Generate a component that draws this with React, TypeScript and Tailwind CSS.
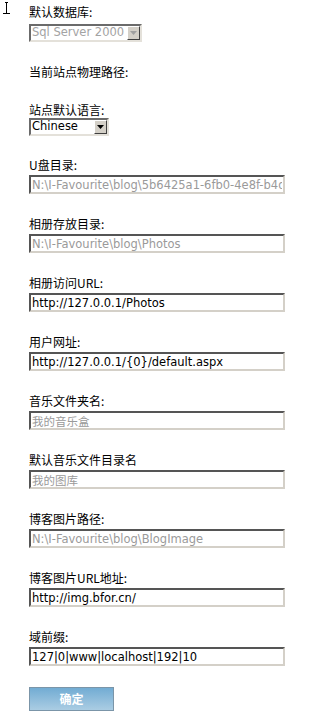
import type { ReactNode } from "react";

const cjk = "font-['SimSun','Noto_Sans_CJK_SC',sans-serif]";
const latin = "font-['DejaVu_Sans','Noto_Sans_CJK_SC',sans-serif]";

type Field = { label: string; value: string; disabled?: boolean };

const fields: Field[] = [
  {
    label: "U盘目录:",
    value: "N:\\I-Favourite\\blog\\5b6425a1-6fb0-4e8f-b4de-3c5a8d2f1e07\\",
    disabled: true,
  },
  { label: "相册存放目录:", value: "N:\\I-Favourite\\blog\\Photos", disabled: true },
  { label: "相册访问URL:", value: "http://127.0.0.1/Photos" },
  { label: "用户网址:", value: "http://127.0.0.1/{0}/default.aspx" },
  { label: "音乐文件夹名:", value: "我的音乐盒", disabled: true },
  { label: "默认音乐文件目录名", value: "我的图库", disabled: true },
  { label: "博客图片路径:", value: "N:\\I-Favourite\\blog\\BlogImage", disabled: true },
  { label: "博客图片URL地址:", value: "http://img.bfor.cn/" },
  { label: "域前缀:", value: "127|0|www|localhost|192|10" },
];

function Label({ children }: { children: ReactNode }) {
  return <div className={`${cjk} text-[12px] leading-[14px] text-black`}>{children}</div>;
}

function Arrow({ disabled }: { disabled?: boolean }) {
  return (
    <div className="flex w-[13px] shrink-0 items-center justify-center border border-t-white border-l-white border-r-[#404040] border-b-[#404040] bg-[#d4d0c8]">
      <svg width="7" height="4" viewBox="0 0 7 4">
        <path d="M0 0h7L3.5 4z" fill={disabled ? "#a0a0a0" : "#000"} />
      </svg>
    </div>
  );
}

function FakeSelect({
  value,
  width,
  disabled,
}: {
  value: string;
  width: string;
  disabled?: boolean;
}) {
  return (
    <div
      className={`flex ${width} h-[18px] border-2 border-t-[#6b6b6b] border-l-[#6b6b6b] border-b-[#e4e1da] border-r-[#e4e1da] bg-white`}
    >
      <div
        className={`${latin} flex flex-1 items-center overflow-hidden whitespace-nowrap pl-[1px] text-[11.5px] ${
          disabled ? "text-[#a3a3a3]" : "text-black"
        }`}
      >
        {value}
      </div>
      <Arrow disabled={disabled} />
    </div>
  );
}

function TextBox({ value, disabled }: Field) {
  return (
    <input
      readOnly
      value={value}
      className={`${latin} block h-[19px] w-[256px] border-2 border-t-[#555] border-l-[#555] border-b-[#d4d0c8] border-r-[#d4d0c8] bg-white px-[1px] text-[11.5px] leading-[15px] outline-none ${
        disabled ? "text-[#9a9a9a]" : "text-black"
      }`}
    />
  );
}

export default function App() {
  return (
    <div className="relative h-[726px] w-[321px] overflow-hidden bg-white pl-[29px] pt-[5px]">
      <svg className="absolute left-[2px] top-[1px]" width="9" height="14" viewBox="0 0 9 14">
        <path d="M3 1.5h3M4.5 1.5v11M1 12.5h7" stroke="#000" strokeWidth="1" fill="none" />
      </svg>

      <Label>默认数据库:</Label>
      <div className="mt-[5px]">
        <FakeSelect value="Sql Server 2000" width="w-[113px]" disabled />
      </div>

      <div className="mt-[23px]">
        <Label>当前站点物理路径:</Label>
      </div>

      <div className="mt-[24px]">
        <Label>站点默认语言:</Label>
        <div className="mt-[1px]">
          <FakeSelect value="Chinese" width="w-[80px]" />
        </div>
      </div>

      <div className="mt-[22px] flex flex-col gap-[23px]">
        {fields.map((f) => (
          <div key={f.label}>
            <Label>{f.label}</Label>
            <div className="mt-[3px]">
              <TextBox {...f} />
            </div>
          </div>
        ))}
      </div>

      <button
        type="button"
        className={`${cjk} mt-[21px] block h-[24px] w-[85px] border border-[#7b95a8] bg-gradient-to-b from-[#72acd3] to-[#aacde3] text-[12px] font-bold text-white`}
      >
        确定
      </button>
    </div>
  );
}
